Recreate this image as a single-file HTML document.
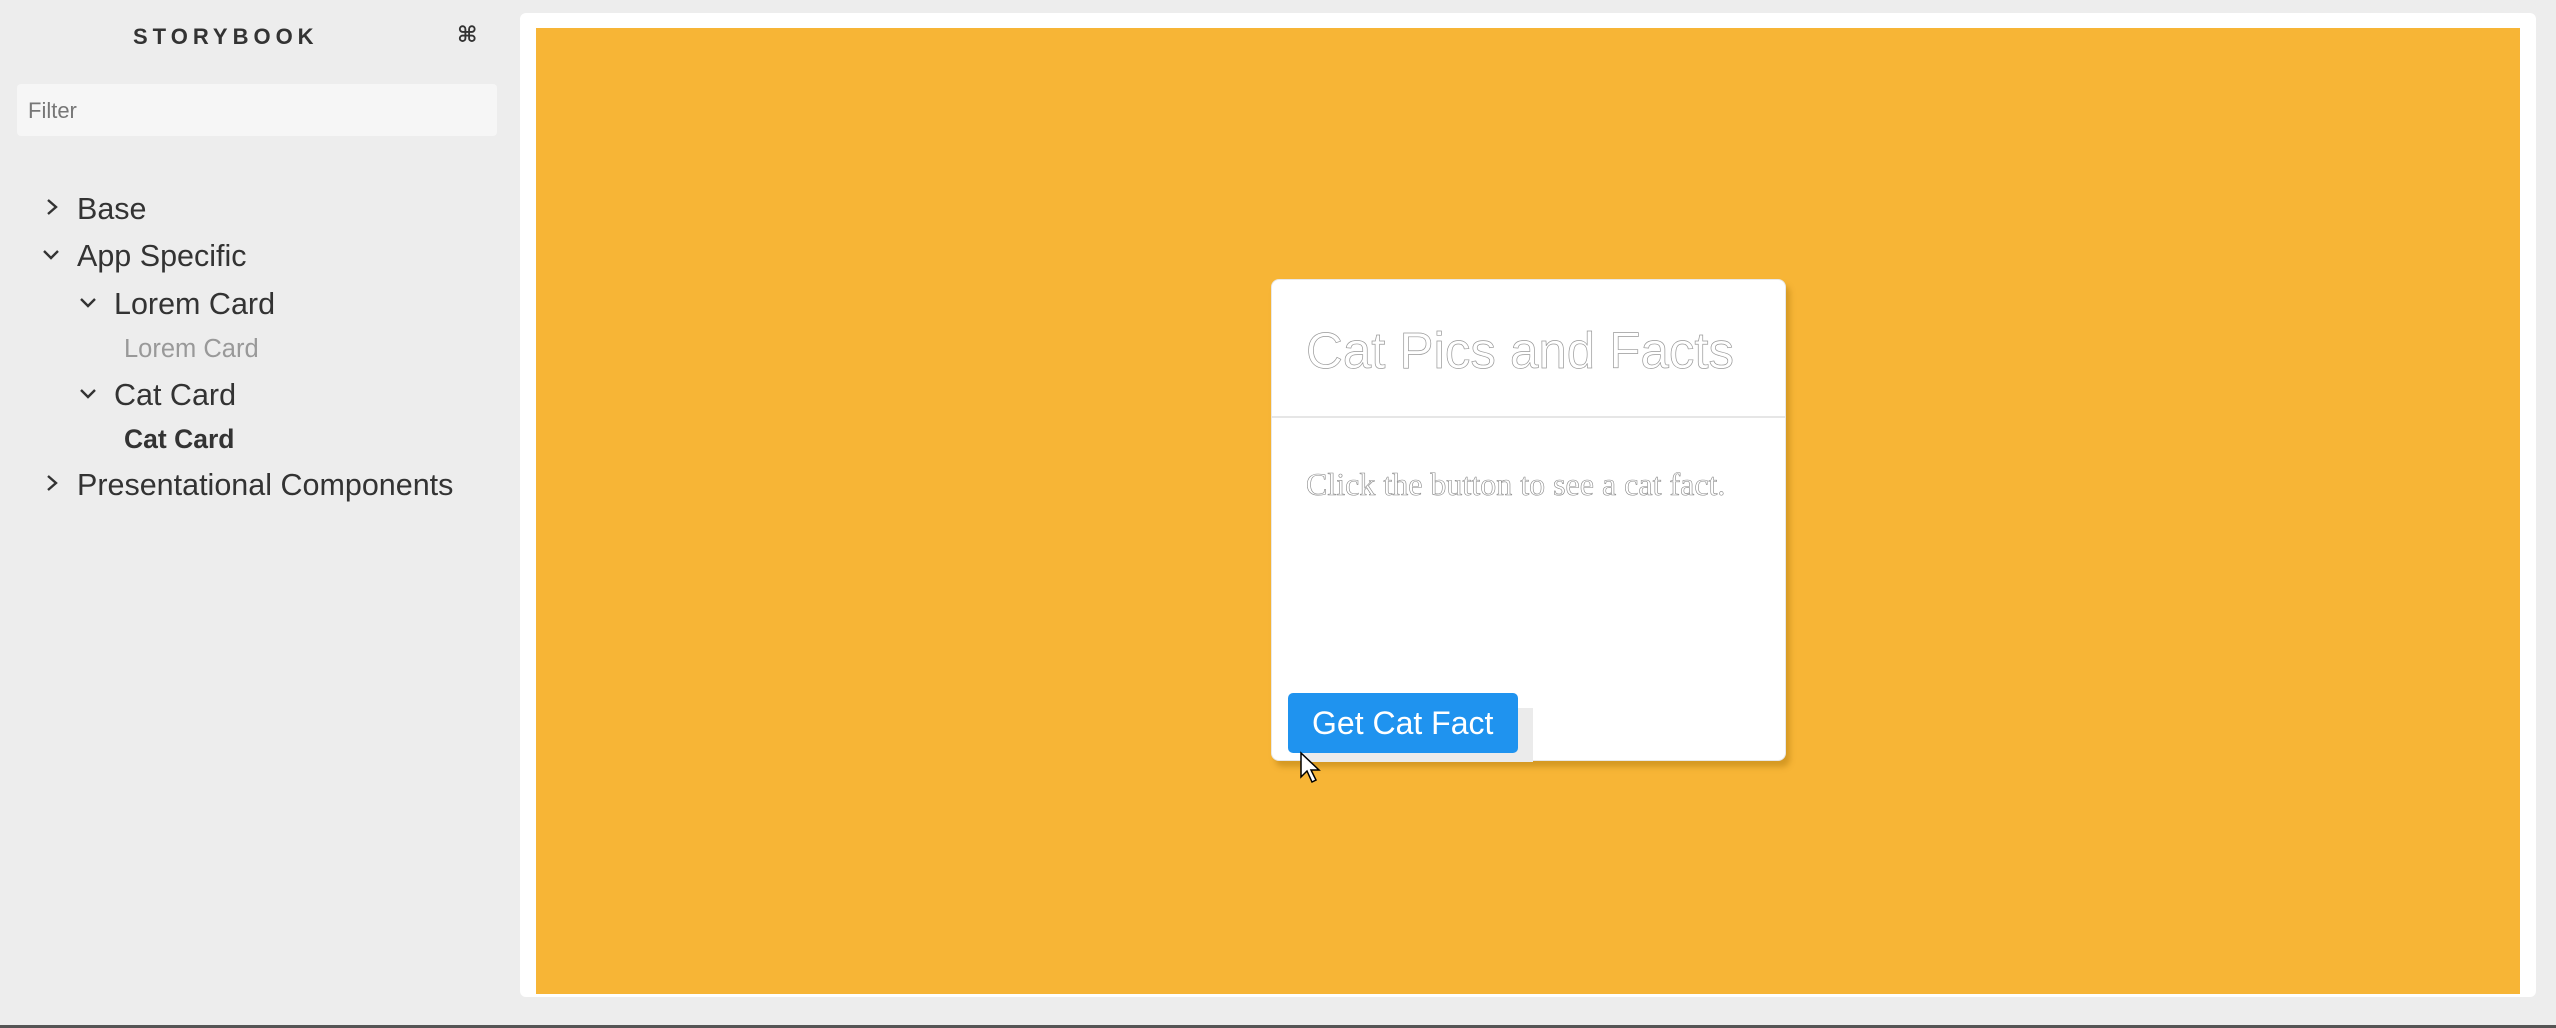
<!DOCTYPE html>
<html><head><meta charset="utf-8"><style>
html,body{margin:0;padding:0;}
body{width:2556px;height:1028px;background:#ededed;position:relative;overflow:hidden;font-family:"Liberation Sans",sans-serif;color:#333;}
.abs{position:absolute;}
.t{position:absolute;white-space:nowrap;line-height:1;}
.frame{left:520px;top:13px;width:2016px;height:984px;background:#fff;border-radius:6px;}
.orange{left:536px;top:28px;width:1984px;height:966px;background:#f7b536;}
.card{left:1271px;top:279px;width:515px;height:482px;background:#fff;border-radius:8px;box-shadow:4px 6px 6px rgba(150,100,0,0.35);border:1px solid #e8e8e8;box-sizing:border-box;}
.div{left:1271px;top:416px;width:515px;height:2px;background:#e6e6e6;}
.btnsh{left:1303px;top:708px;width:230px;height:54px;background:#ebebeb;}
.btn{left:1288px;top:693px;width:230px;height:60px;background:#1f93ef;border-radius:5px;}
.bottom{left:0;top:1025px;width:2556px;height:3px;background:#555;}
</style></head><body>
<div class="t" style="left:133px;top:26px;font-size:22px;font-weight:bold;letter-spacing:5px;color:#333;">STORYBOOK</div>
<div class="t" style="left:457px;top:25px;font-size:22px;font-weight:bold;font-family:'DejaVu Sans',sans-serif;">⌘</div>
<div class="abs" style="left:17px;top:84px;width:480px;height:52px;background:#f6f6f6;border-radius:4px;"></div>
<div class="t" style="left:28px;top:100px;font-size:22px;color:#777;">Filter</div>

<svg class="abs" style="left:0;top:0" width="500" height="520">
<g fill="none" stroke="#333" stroke-width="2.4">
<polyline points="48,200 56,207 48,214"/>
<polyline points="44,251 51,258 58,251"/>
<polyline points="81,299 88,306 95,299"/>
<polyline points="81,390 88,397 95,390"/>
<polyline points="48,476 56,483 48,490"/>
</g></svg>
<div class="t" style="left:77px;top:194px;font-size:30.5px;">Base</div>
<div class="t" style="left:77px;top:241px;font-size:30.5px;">App Specific</div>
<div class="t" style="left:114px;top:289px;font-size:30.5px;">Lorem Card</div>
<div class="t" style="left:124px;top:337px;font-size:25.5px;color:#999;">Lorem Card</div>
<div class="t" style="left:114px;top:380px;font-size:30.5px;">Cat Card</div>
<div class="t" style="left:124px;top:426px;font-size:26.5px;font-weight:bold;">Cat Card</div>
<div class="t" style="left:77px;top:470px;font-size:30.5px;">Presentational Components</div>

<div class="abs frame"></div>
<div class="abs orange"></div>
<div class="abs card"></div>
<div class="abs div"></div>
<div class="t" style="left:1306px;top:325px;font-size:51px;color:#fff;-webkit-text-stroke:0.7px #999;">Cat Pics and Facts</div>
<div class="t" style="left:1306px;top:468px;font-size:32px;font-family:'Liberation Serif',serif;color:#fff;-webkit-text-stroke:0.6px #888;">Click the button to see a cat fact.</div>
<div class="abs btnsh"></div>
<div class="abs btn"></div>
<div class="t" style="left:1312px;top:707px;font-size:32px;color:#fff;">Get Cat Fact</div>
<svg class="abs" style="left:1299px;top:751px" width="30" height="36"><path d="M2 2 L2 26 L8 20 L13 31 L17 29 L12 19 L20 19 Z" fill="#fff" stroke="#000" stroke-width="1.5"/></svg>
<div class="abs bottom"></div>
</body></html>
